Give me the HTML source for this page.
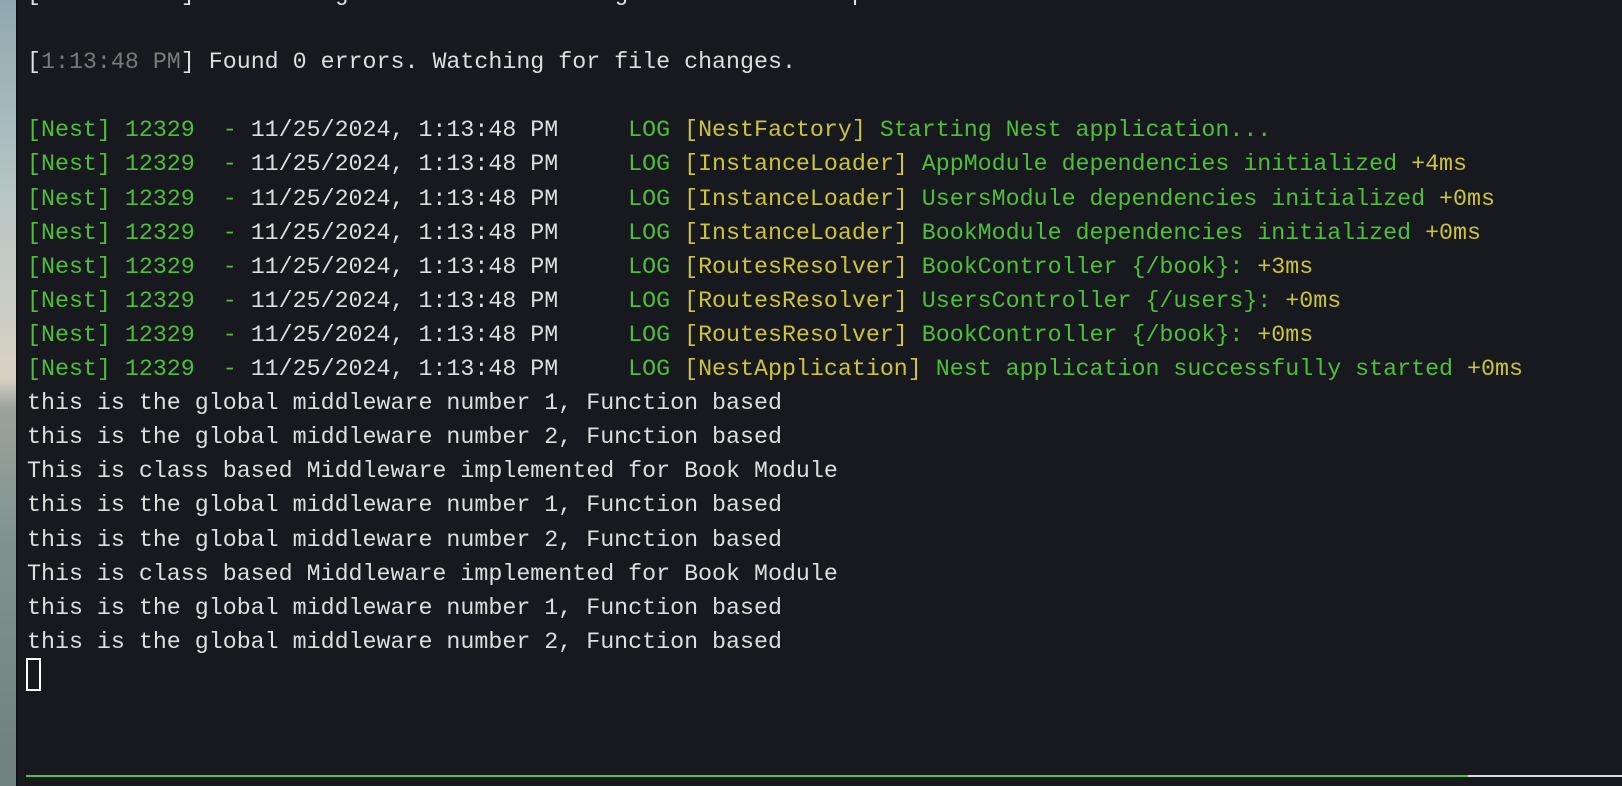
<!DOCTYPE html>
<html><head><meta charset="utf-8"><style>
html,body{margin:0;padding:0;width:1622px;height:786px;overflow:hidden;background:#17191e}
.strip{position:absolute;left:0;top:0;width:16px;height:786px;background:linear-gradient(#8fa9b0 0%,#b7c6c4 25%,#d9d2c4 48%,#9aa39c 52%,#7f928f 70%,#6f807d 100%)}
.edge{position:absolute;left:16px;top:0;width:2px;height:786px;background:#0f1114}
.t{position:absolute;left:27px;top:-23px;font-family:"Liberation Mono",monospace;font-size:23.3px;line-height:34.1px;color:#dedede;white-space:pre}
.g{color:#4fbf3a}.y{color:#cbc43c}.d{color:#7a7a7a}
.cur{position:absolute;left:26px;top:658px;width:11px;height:29px;border:2px solid #fff}
.bar{position:absolute;left:26px;top:775px;width:1442px;height:2px;background:#55c23a}
.bar2{position:absolute;left:1468px;top:775px;width:154px;height:2px;background:#ddd}
</style></head><body>
<div class="strip"></div><div class="edge"></div>
<div class="t">[<span class="d">1:13:48 PM</span>] File change detected. Starting incremental compilation...

[<span class="d">1:13:48 PM</span>] Found 0 errors. Watching for file changes.

<span class="g">[Nest] 12329  - </span>11/25/2024, 1:13:48 PM<span class="g">     LOG </span><span class="y">[NestFactory] </span><span class="g">Starting Nest application...</span>
<span class="g">[Nest] 12329  - </span>11/25/2024, 1:13:48 PM<span class="g">     LOG </span><span class="y">[InstanceLoader] </span><span class="g">AppModule dependencies initialized </span><span class="y">+4ms</span>
<span class="g">[Nest] 12329  - </span>11/25/2024, 1:13:48 PM<span class="g">     LOG </span><span class="y">[InstanceLoader] </span><span class="g">UsersModule dependencies initialized </span><span class="y">+0ms</span>
<span class="g">[Nest] 12329  - </span>11/25/2024, 1:13:48 PM<span class="g">     LOG </span><span class="y">[InstanceLoader] </span><span class="g">BookModule dependencies initialized </span><span class="y">+0ms</span>
<span class="g">[Nest] 12329  - </span>11/25/2024, 1:13:48 PM<span class="g">     LOG </span><span class="y">[RoutesResolver] </span><span class="g">BookController {/book}: </span><span class="y">+3ms</span>
<span class="g">[Nest] 12329  - </span>11/25/2024, 1:13:48 PM<span class="g">     LOG </span><span class="y">[RoutesResolver] </span><span class="g">UsersController {/users}: </span><span class="y">+0ms</span>
<span class="g">[Nest] 12329  - </span>11/25/2024, 1:13:48 PM<span class="g">     LOG </span><span class="y">[RoutesResolver] </span><span class="g">BookController {/book}: </span><span class="y">+0ms</span>
<span class="g">[Nest] 12329  - </span>11/25/2024, 1:13:48 PM<span class="g">     LOG </span><span class="y">[NestApplication] </span><span class="g">Nest application successfully started </span><span class="y">+0ms</span>
this is the global middleware number 1, Function based
this is the global middleware number 2, Function based
This is class based Middleware implemented for Book Module
this is the global middleware number 1, Function based
this is the global middleware number 2, Function based
This is class based Middleware implemented for Book Module
this is the global middleware number 1, Function based
this is the global middleware number 2, Function based</div>
<div class="cur"></div>
<div class="bar"></div><div class="bar2"></div>
</body></html>
